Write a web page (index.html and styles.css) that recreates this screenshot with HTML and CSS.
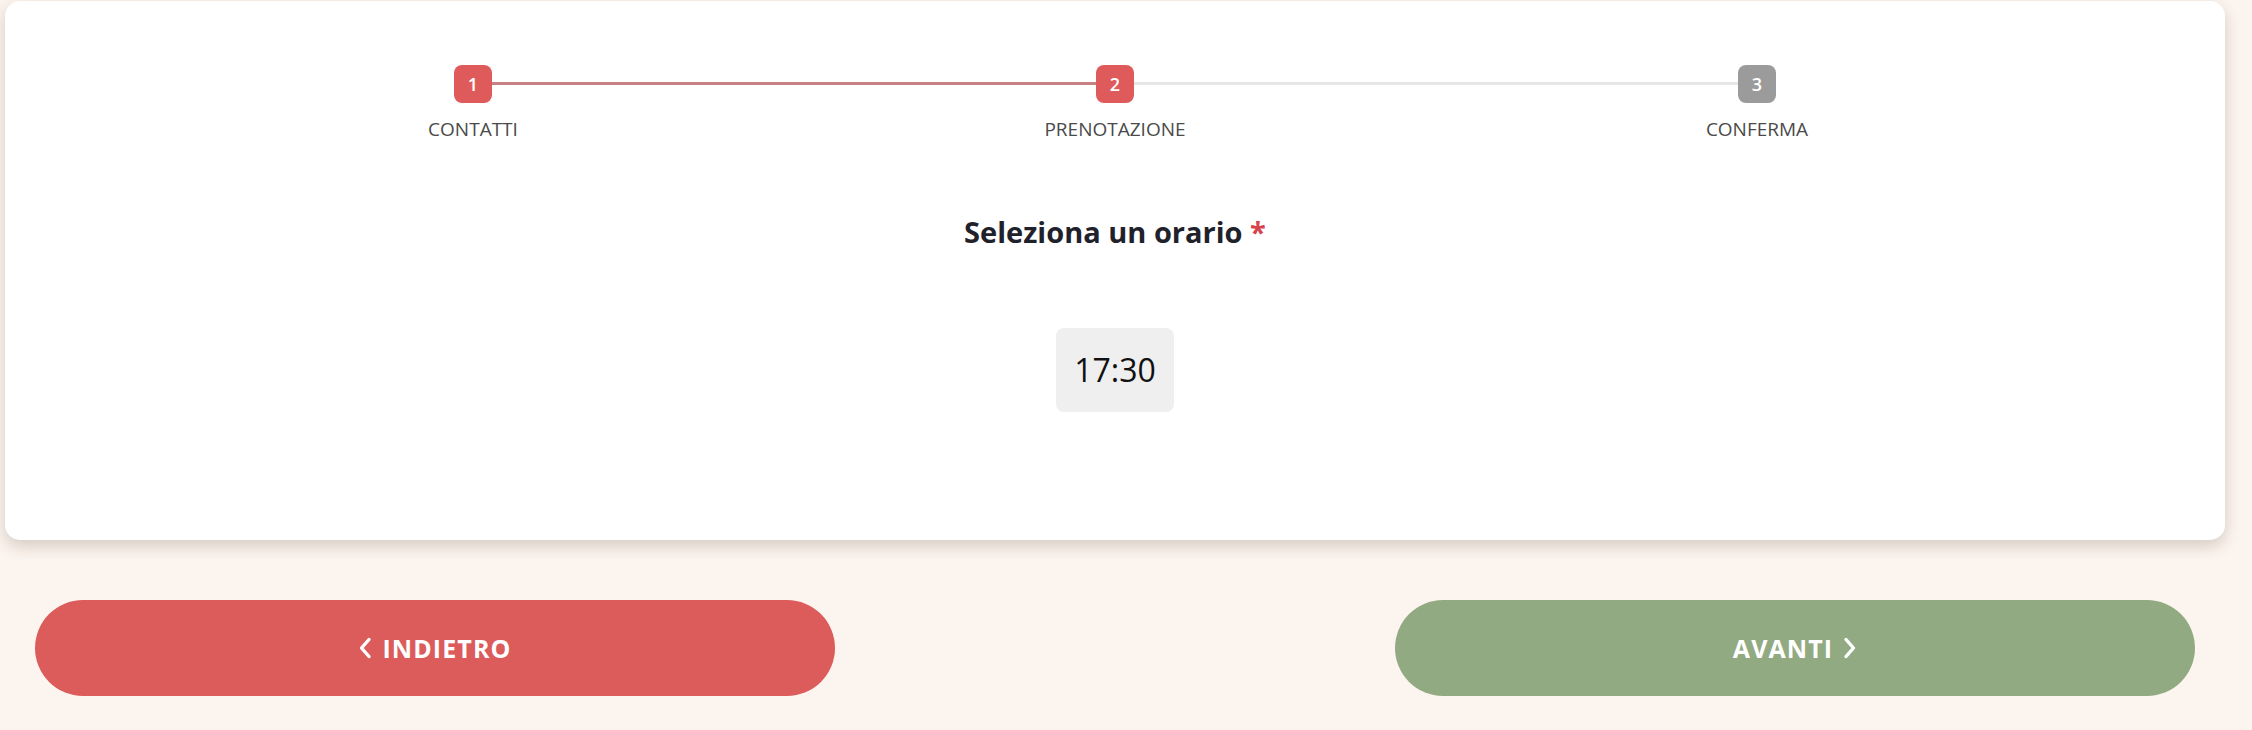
FILE: index.html
```html
<!DOCTYPE html>
<html lang="it">
<head>
<meta charset="utf-8">
<title>Prenotazione</title>
<link rel="stylesheet" href="styles.css">
</head>
<body>
<div class="page">
  <section class="card">
    <ol class="stepper">
      <li class="step">
        <div class="track">
          <span class="seg seg-none"></span>
          <span class="num num-done">1</span>
          <span class="seg seg-done"></span>
        </div>
        <span class="label">CONTATTI</span>
      </li>
      <li class="step">
        <div class="track">
          <span class="seg seg-done"></span>
          <span class="num num-done">2</span>
          <span class="seg seg-todo"></span>
        </div>
        <span class="label">PRENOTAZIONE</span>
      </li>
      <li class="step">
        <div class="track">
          <span class="seg seg-todo"></span>
          <span class="num num-todo">3</span>
          <span class="seg seg-none"></span>
        </div>
        <span class="label">CONFERMA</span>
      </li>
    </ol>

    <h2 class="title">Seleziona un orario <span class="req">*</span></h2>

    <div class="slots">
      <button class="slot" type="button">17:30</button>
    </div>
  </section>

  <div class="actions">
    <button class="btn btn-back" type="button">
      <svg class="chev" width="14" height="22" viewBox="0 0 14 22" aria-hidden="true"><polyline points="11,2.5 3.5,11 11,19.5" fill="none" stroke="#fff" stroke-width="3.4" stroke-linecap="round" stroke-linejoin="round"/></svg>
      <span>INDIETRO</span>
    </button>
    <button class="btn btn-next" type="button">
      <span>AVANTI</span>
      <svg class="chev" width="14" height="22" viewBox="0 0 14 22" aria-hidden="true"><polyline points="3,2.5 10.5,11 3,19.5" fill="none" stroke="#fff" stroke-width="3.4" stroke-linecap="round" stroke-linejoin="round"/></svg>
    </button>
  </div>
</div>
</body>
</html>
```

FILE: styles.css
```css
* { box-sizing: border-box; }

html, body {
  margin: 0;
  padding: 0;
  background: #fcf4ee;
  font-family: "Open Sans", "Noto Sans", "Liberation Sans", sans-serif;
}

.page {
  padding: 1px 27px 0 5px;
}

.card {
  background: #ffffff;
  border-radius: 15px;
  box-shadow: 0 6px 16px rgba(60, 40, 30, 0.2);
  padding: 64px 0 128px;
}

.stepper {
  list-style: none;
  margin: 0 auto;
  padding: 0;
  width: 1926px;
  display: grid;
  grid-template-columns: repeat(3, 1fr);
}

.step {
  display: flex;
  flex-direction: column;
  align-items: center;
  gap: 13px;
}

.track {
  width: 100%;
  display: flex;
  align-items: center;
}

.seg {
  flex: 1;
  height: 3px;
  margin-bottom: 2px;
}

.seg-done { background: #c98082; }
.seg-todo { background: #e9e7e6; }
.seg-none { background: transparent; }

.num {
  width: 38px;
  height: 38px;
  border-radius: 8px;
  display: flex;
  align-items: center;
  justify-content: center;
  color: #fff;
  font-size: 18px;
  font-weight: 600;
}

.num-done { background: #df5b5b; }
.num-todo { background: #9b9b9b; }

.label {
  font-size: 19px;
  line-height: 26px;
  color: #4a4a4a;
}

.title {
  margin: 70px 0 0;
  text-align: center;
  font-size: 29px;
  line-height: 40px;
  font-weight: 700;
  color: #1f222b;
}

.req { color: #d6434c; }

.slots {
  margin-top: 76px;
  display: flex;
  justify-content: center;
}

.slot {
  border: 0;
  background: #efefef;
  border-radius: 8px;
  padding: 20px 18px;
  font-family: inherit;
  font-size: 32px;
  line-height: 44px;
  color: #111;
}

.actions {
  margin-top: 60px;
  padding: 0 30px;
  display: flex;
  justify-content: space-between;
}

.btn {
  width: 800px;
  height: 96px;
  border: 0;
  border-radius: 48px;
  display: flex;
  align-items: center;
  justify-content: center;
  gap: 10px;
  color: #fff;
  font-family: inherit;
  font-size: 25px;
  font-weight: 700;
  letter-spacing: 1.1px;
}

.btn-back { background: #dc5b5b; }
.btn-next { background: #92aa82; }

.chev { display: block; }
```
